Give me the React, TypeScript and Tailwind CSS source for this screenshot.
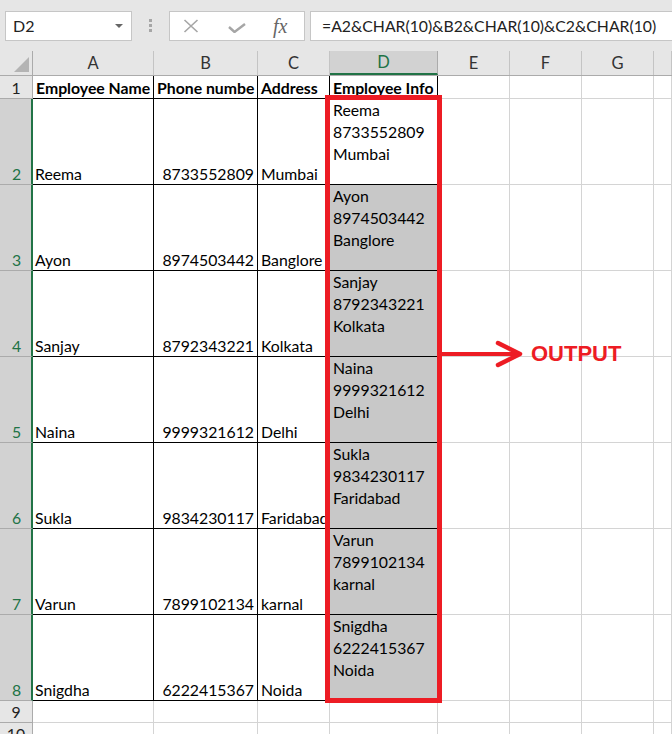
const colNames = ["A", "B", "C", "D", "E", "F", "G", ""];
const colW = [
  "w-[121px]",
  "w-[104px]",
  "w-[72px]",
  "w-[108px]",
  "w-[72px]",
  "w-[72px]",
  "w-[72px]",
  "flex-1",
];

const employees = [
  ["Reema", "8733552809", "Mumbai"],
  ["Ayon", "8974503442", "Banglore"],
  ["Sanjay", "8792343221", "Kolkata"],
  ["Naina", "9999321612", "Delhi"],
  ["Sukla", "9834230117", "Faridabad"],
  ["Varun", "7899102134", "karnal"],
  ["Snigdha", "6222415367", "Noida"],
];

const font = { fontFamily: "Lato, 'Open Sans', sans-serif" };

const FormulaBar = () => (
  <div className="h-[51px] bg-[#e6e6e6] flex items-start pt-[11px]">
    <div className="ml-[5px] w-[127px] h-[30px] bg-white border border-[#c6c6c6] flex items-center justify-between pl-[7px] pr-[8px]">
      <span className="text-[16px] text-[#222]">D2</span>
      <span className="w-0 h-0 border-l-[4px] border-r-[4px] border-t-[4px] border-l-transparent border-r-transparent border-t-[#666]" />
    </div>
    <div className="ml-[17px] mt-[8px] flex flex-col gap-[2px]">
      <span className="w-[3px] h-[3px] bg-[#a6a6a6]" />
      <span className="w-[3px] h-[3px] bg-[#a6a6a6]" />
      <span className="w-[3px] h-[3px] bg-[#a6a6a6]" />
    </div>
    <div className="ml-[17px] w-[136px] h-[30px] bg-white border border-[#c6c6c6] flex items-center">
      <svg width="16" height="14" viewBox="0 0 16 14" className="ml-[13px]">
        <path d="M1.5 1 L14.5 13 M14.5 1 L1.5 13" stroke="#a6a6a6" strokeWidth="1.6" fill="none" />
      </svg>
      <svg width="18" height="10" viewBox="0 0 18 10" className="ml-[29px] mt-[4px]">
        <path d="M1 4 L6.5 9 L17 1" stroke="#a6a6a6" strokeWidth="2.4" fill="none" />
      </svg>
      <span
        className="ml-[27px] text-[20px] italic text-[#666] leading-none"
        style={{ fontFamily: "'Liberation Serif', serif" }}
      >
        fx
      </span>
    </div>
    <div className="ml-[5px] flex-1 h-[30px] bg-white border border-[#c6c6c6] border-r-0 flex items-center pl-[11px]">
      <span className="text-[15.8px] text-[#222] whitespace-nowrap">
        =A2&amp;CHAR(10)&amp;B2&amp;CHAR(10)&amp;C2&amp;CHAR(10)
      </span>
    </div>
  </div>
);

const HeaderRow = () => (
  <div className="flex h-[25px] bg-[#e6e6e6] border-b border-[#ababab]">
    <div className="w-[33px] border-r border-[#ababab] flex items-end justify-end pr-[3px] pb-[3px]">
      <svg width="15" height="15" viewBox="0 0 15 15">
        <path d="M15 0 L15 15 L0 15 Z" fill="#b4b4b4" />
      </svg>
    </div>
    {colNames.map((c, i) =>
      c === "D" ? (
        <div
          key={i}
          className={`${colW[i]} bg-[#d2d2d2] border-r border-[#ababab] border-b-2 border-b-[#217346] flex items-center justify-center text-[#217346] text-[16.5px]`}
        >
          {c}
        </div>
      ) : (
        <div
          key={i}
          className={`${colW[i]} border-r border-[#c4c4c4] flex items-center justify-center text-[#333] text-[16.5px]`}
        >
          {c}
        </div>
      )
    )}
  </div>
);

const RowHead = ({ n, active }: { n: number; active?: boolean }) =>
  active ? (
    <div className="w-[33px] shrink-0 bg-[#d2d2d2] border-r-2 border-[#217346] border-b border-b-[#ababab] flex items-end justify-center pl-[2px] text-[#217346] leading-[20px]">
      {n}
    </div>
  ) : (
    <div className="w-[33px] shrink-0 bg-[#e6e6e6] border-r border-[#ababab] border-b border-b-[#ababab] flex items-end justify-center text-[#222] leading-[20px]">
      {n}
    </div>
  );

const EmptyCells = ({ from }: { from: number }) => (
  <>
    {colW.slice(from).map((w, i) => (
      <div key={i} className={`${w} shrink-0 border-r border-b border-[#d4d4d4]`} />
    ))}
  </>
);

const App = () => {
  return (
    <div className="w-[672px] h-[742px] overflow-hidden bg-white relative text-[15.8px] text-black" style={font}>
      <FormulaBar />
      <HeaderRow />

      {/* row 1 */}
      <div className="flex h-[23px]">
        <RowHead n={1} />
        {["Employee Name", "Phone numbe", "Address", "Employee Info"].map((t, i) => (
          <div
            key={i}
            className={`${colW[i]} shrink-0 border-r border-b border-black flex items-end pl-[3px] font-bold leading-[20px] whitespace-nowrap overflow-hidden`}
          >
            {t}
          </div>
        ))}
        <EmptyCells from={4} />
      </div>

      {employees.map((e, r) => (
        <div key={r} className="flex h-[86px]">
          <RowHead n={r + 2} active />
          <div className={`${colW[0]} shrink-0 border-r border-b border-black flex items-end pl-[2px] leading-[20px]`}>
            {e[0]}
          </div>
          <div className={`${colW[1]} shrink-0 border-r border-b border-black flex items-end justify-end pr-[3px] leading-[20px]`}>
            {e[1]}
          </div>
          <div className={`${colW[2]} shrink-0 border-r border-b border-black flex items-end pl-[3px] leading-[20px] whitespace-nowrap overflow-hidden`}>
            {e[2]}
          </div>
          <div
            className={`${colW[3]} shrink-0 border-r border-b border-black flex flex-col pl-[3px] leading-[22px] ${
              r === 0 ? "bg-white" : "bg-[#c8c8c8]"
            }`}
          >
            <span>{e[0]}</span>
            <span>{e[1]}</span>
            <span>{e[2]}</span>
          </div>
          <EmptyCells from={4} />
        </div>
      ))}

      {/* rows 9, 10 (sheet is cut off below row 10's top) */}
      <div className="flex h-[22px]">
        <RowHead n={9} />
        <EmptyCells from={0} />
      </div>
      <div className="h-[11px] overflow-hidden">
        <div className="flex h-[22px]">
          <RowHead n={10} />
          <EmptyCells from={0} />
        </div>
      </div>

      {/* annotation */}
      <div className="absolute left-[325px] top-[95px] w-[117px] h-[608px] border-[5px] border-[#ed1c24]" />
      <svg className="absolute left-[440px] top-[338px]" width="90" height="32" viewBox="0 0 90 32">
        <path d="M0 16 L79 16" stroke="#ed1c24" strokeWidth="4" />
        <path d="M58 5 L80 16 L58 27" stroke="#ed1c24" strokeWidth="4.5" fill="none" strokeLinecap="round" strokeLinejoin="round" />
      </svg>
      <div
        className="absolute left-[531px] top-[340px] text-[22px] font-bold text-[#ed1c24] leading-[28px]"
        style={{ fontFamily: "'Liberation Sans', Arial, sans-serif" }}
      >
        OUTPUT
      </div>
    </div>
  );
};

export default App;
